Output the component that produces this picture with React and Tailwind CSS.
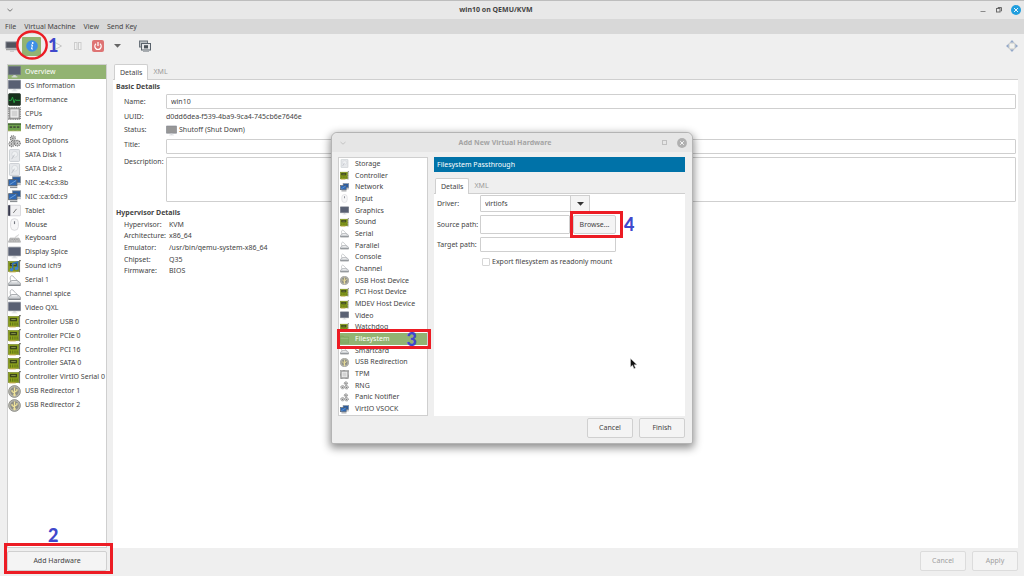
import React from "react";

/* ---------- hardware icons, all on a 16 x 16 grid ---------- */

const MonitorArt = ({ fill = "#596073" }) => (
  <>
    <rect x="0.4" y="1.4" width="15.200" height="10.600" rx="0.600" fill={fill} stroke="#7d828e" strokeWidth="0.800" />
    <path d="M6.500 12.400h3v2h-3z" fill="#d2d4d8" />
    <path d="M4.500 14h7v1.200h-7z" fill="#dfe1e4" />
  </>
);

const CardArt = () => (
  <>
    <path d="M13 3.500h1.500M13 8h1.500M13 12h1.500" stroke="#8b8b86" strokeWidth="1.600" />
    <path d="M15.800 0.800h-1.600v14.400" fill="none" stroke="#74766f" strokeWidth="1.300" />
    <rect x="0.400" y="2" width="12.800" height="12" fill="#8da41b" stroke="#6d7d1c" strokeWidth="0.800" />
    <rect x="2.200" y="3.600" width="9" height="4.200" fill="#3b451a" />
    <path d="M4 5.600h5.500" stroke="#8f9c52" strokeWidth="1.100" />
    <path d="M3 9.200v3.600M5.800 9.200v3.600M8.600 9.200v3.600M11.200 9.200v3.600" stroke="#63731a" strokeWidth="1.300" />
    <path d="M1.500 14.600h8" stroke="#c3a93c" strokeWidth="1.200" />
  </>
);

const SerialArt = () => (
  <>
    <path d="M3.500 9C1.500 4 3.500 0.800 6 2.600S8.500 6 11.500 8" fill="none" stroke="#b2b5b8" strokeWidth="1.200" />
    <path d="M0.800 11L4.500 8h7l3.700 3v3H0.800z" fill="#cfd2d5" stroke="#95999d" strokeWidth="0.900" />
    <path d="M4.500 9.600h6.500" stroke="#f8f8f8" strokeWidth="1.300" />
    <path d="M0.600 13.800h14.800" stroke="#777b7f" strokeWidth="1.300" />
  </>
);

const Gear = ({ cx, cy, r }) => (
  <>
    <circle cx={cx} cy={cy} r={r} fill="#e9e9e9" stroke="#6f6f6f" strokeWidth="1.5" strokeDasharray="1.4 0.9" />
    <circle cx={cx} cy={cy} r={r - 1} fill="#dedede" stroke="#8a8a8a" strokeWidth="0.6" />
    <circle cx={cx} cy={cy} r="0.9" fill="#5a5a5a" />
  </>
);

const art = {
  monitor: <MonitorArt />,
  monitorGrey: <MonitorArt fill="#979797" />,
  performance: (
    <>
      <rect x="0.5" y="0.5" width="15" height="15" rx="2" fill="#17301c" stroke="#3b463d" />
      <path d="M1 9h3l1.500-4 2 7 1.500-4 1 1h5" fill="none" stroke="#28a544" strokeWidth="1.2" />
    </>
  ),
  cpu: (
    <>
      <rect x="1" y="1" width="14" height="14" fill="#a9a9a9" stroke="#777" strokeDasharray="1.300 0.900" strokeWidth="1.6" />
      <rect x="2.500" y="2.500" width="11" height="11" rx="1" fill="#f0f0f0" stroke="#8e8e8e" strokeWidth="0.800" />
      <rect x="4.500" y="4.500" width="7" height="7" fill="#d3d3d3" />
    </>
  ),
  memory: (
    <>
      <rect x="0" y="3" width="16" height="9.500" fill="#6ea04c" />
      <path d="M0 3.800h16" stroke="#3f5e33" strokeWidth="1.600" />
      <path d="M2 7.500h3M6.500 7.500h3M11 7.500h3" stroke="#45533c" strokeWidth="2" />
      <path d="M0 12h16" stroke="#c8b56a" strokeDasharray="1 0.6" />
    </>
  ),
  gears: (
    <>
      <Gear cx={6} cy={4} r={3} />
      <Gear cx={4.500} cy={11} r={3.200} />
      <Gear cx={11.500} cy={10} r={3.500} />
    </>
  ),
  gearsLight: (
    <>
      <Gear cx={10.500} cy={4.200} r={2.900} />
      <Gear cx={4.500} cy={11} r={3.100} />
      <Gear cx={11.500} cy={11} r={3.300} />
    </>
  ),
  disk: (
    <>
      <rect x="1.800" y="0.700" width="12.400" height="14.600" rx="1" fill="#e6e8eb" stroke="#c3c7cc" />
      <circle cx="8.300" cy="6.500" r="3.600" fill="#eff1f3" stroke="#cdd1d6" strokeWidth="0.8" />
      <path d="M8 7l-3.500 5.500" stroke="#b9bdc3" strokeWidth="1.100" />
    </>
  ),
  nic: (
    <>
      <rect x="5.500" y="1" width="10" height="7.500" fill="#2b5c9e" stroke="#8b9097" />
      <path d="M11 10.300h4.800" stroke="#b3b6b9" strokeWidth="2" />
      <rect x="0.800" y="4.500" width="10.200" height="7.500" fill="#2f69b5" stroke="#5a5f66" />
      <path d="M2 10.500L10 5.500" stroke="#6f9fd9" strokeWidth="1.200" />
      <path d="M2.500 14h9" stroke="#8b8f93" strokeWidth="1.800" />
    </>
  ),
  tablet: (
    <>
      <rect x="0.500" y="1.500" width="15" height="13" rx="1" fill="#f1f1f3" stroke="#cfcfd4" />
      <path d="M1.500 1.500v13" stroke="#36384c" strokeWidth="2.600" />
      <path d="M6.500 11l4-5" stroke="#777" strokeWidth="1.200" />
    </>
  ),
  mouse: (
    <>
      <rect x="3.200" y="0.800" width="9.600" height="14.400" rx="4.800" fill="#f6f6f7" stroke="#d4d4d8" />
      <path d="M8 4v3.500" stroke="#777a82" strokeWidth="1.400" />
    </>
  ),
  keyboard: (
    <>
      <path d="M9 7c0-3 4-1 4-4" fill="none" stroke="#c4c4c4" />
      <path d="M2.500 7.500h11l2 5h-15z" fill="#cfcfcf" stroke="#a0a0a0" strokeWidth="0.800" />
      <path d="M3 9h10M2 11h12" stroke="#7f7f7f" strokeWidth="0.900" strokeDasharray="1.500 0.600" />
    </>
  ),
  sound: (
    <>
      <CardArt />
      <path d="M5.800 12V4.500l6-2v8" fill="none" stroke="#2f6fb8" strokeWidth="2" />
      <circle cx="4.400" cy="12" r="2.200" fill="#3f83cf" />
      <circle cx="10.400" cy="10.500" r="2.200" fill="#3f83cf" />
    </>
  ),
  serial: <SerialArt />,
  card: <CardArt />,
  usb: (
    <>
      <circle cx="8" cy="8" r="7.300" fill="#b4b4ae" stroke="#87877f" />
      <circle cx="8" cy="8" r="5.200" fill="#8f8f84" />
      <path d="M8 13V3M8 10L5 8V6M8 9l3-2V5" fill="none" stroke="#efe39a" strokeWidth="1.500" />
      <circle cx="8" cy="12.300" r="1.500" fill="#efe39a" />
    </>
  ),
  folder: (
    <>
      <path d="M0.800 2h5l1.500 1.600h8v11H0.800z" fill="#86ad66" stroke="#78a058" />
      <path d="M1 5.800h14" stroke="#b3cc9b" />
    </>
  ),
};

const Icon = ({ name, className }) => (
  <svg viewBox="0 0 16 16" className={`shrink-0 ${className}`} aria-hidden="true">
    {art[name]}
  </svg>
);

/* ---------- data ---------- */

const devices = [
  ["Overview", "monitor"],
  ["OS information", "monitor"],
  ["Performance", "performance"],
  ["CPUs", "cpu"],
  ["Memory", "memory"],
  ["Boot Options", "gears"],
  ["SATA Disk 1", "disk"],
  ["SATA Disk 2", "disk"],
  ["NIC :e4:c3:8b", "nic"],
  ["NIC :ca:6d:c9", "nic"],
  ["Tablet", "tablet"],
  ["Mouse", "mouse"],
  ["Keyboard", "keyboard"],
  ["Display Spice", "monitor"],
  ["Sound ich9", "sound"],
  ["Serial 1", "serial"],
  ["Channel spice", "serial"],
  ["Video QXL", "monitor"],
  ["Controller USB 0", "card"],
  ["Controller PCIe 0", "card"],
  ["Controller PCI 16", "card"],
  ["Controller SATA 0", "card"],
  ["Controller VirtIO Serial 0", "card"],
  ["USB Redirector 1", "usb"],
  ["USB Redirector 2", "usb"],
];

const hardwareTypes = [
  ["Storage", "disk"],
  ["Controller", "card"],
  ["Network", "nic"],
  ["Input", "mouse"],
  ["Graphics", "monitor"],
  ["Sound", "card"],
  ["Serial", "serial"],
  ["Parallel", "serial"],
  ["Console", "serial"],
  ["Channel", "serial"],
  ["USB Host Device", "usb"],
  ["PCI Host Device", "card"],
  ["MDEV Host Device", "card"],
  ["Video", "monitor"],
  ["Watchdog", "card"],
  ["Filesystem", "folder"],
  ["Smartcard", "serial"],
  ["USB Redirection", "usb"],
  ["TPM", "cpu"],
  ["RNG", "gearsLight"],
  ["Panic Notifier", "gearsLight"],
  ["VirtIO VSOCK", "nic"],
];

const hypervisor = [
  ["Hypervisor:", "KVM"],
  ["Architecture:", "x86_64"],
  ["Emulator:", "/usr/bin/qemu-system-x86_64"],
  ["Chipset:", "Q35"],
  ["Firmware:", "BIOS"],
];

/* ---------- shared pieces ---------- */

const Mark = ({ children, className }) => (
  <span
    className={`pointer-events-none absolute z-10 font-['Lato',sans-serif] text-[18px] leading-none font-black text-[#3f48cc] ${className}`}
  >
    {children}
  </span>
);

const Frame = ({ className }) => (
  <span className={`pointer-events-none absolute z-10 border-3 border-[#ec1c24] ${className}`} />
);

const Button = ({ children, className = "", ...rest }) => (
  <button
    type="button"
    className={`rounded-xs border border-[#d0d0d0] bg-[#f4f4f4] text-center disabled:border-[#dcdcdc] disabled:text-[#a0a0a0] ${className}`}
    {...rest}
  >
    {children}
  </button>
);

const Tabs = () => (
  <div role="tablist" className="flex h-[15px] shrink-0 items-stretch pl-px">
    <button
      type="button"
      role="tab"
      aria-selected="true"
      className="z-[1] -mb-px rounded-t-xs border border-b-0 border-[#cfcfcf] bg-white px-[5px]"
    >
      Details
    </button>
    <button type="button" role="tab" aria-selected="false" className="px-[5px] text-[#9a9a9a]">
      XML
    </button>
  </div>
);

const field = "rounded-[1px] border border-[#cfcfcf] bg-white px-1 outline-none";

/* ---------- window parts ---------- */

function TitleBar() {
  return (
    <header className="flex h-[19px] items-center border-t border-[#bdbdbd] bg-[#e8e8e8]">
      <button type="button" aria-label="Window menu" className="flex w-5 justify-center">
        <svg viewBox="0 0 6 6" className="size-[6px]" fill="none" stroke="#777">
          <path d="M0.500 2l2.500 2.200L5.500 2" />
        </svg>
      </button>
      <h1 className="flex-1 text-center font-bold">win10 on QEMU/KVM</h1>
      <div className="flex w-[52px] items-center justify-end gap-2 pr-[3px]">
        <button type="button" aria-label="Minimize">
          <svg viewBox="0 0 8 8" className="size-2" stroke="#8a8a8a">
            <path d="M1.500 5.500h5" />
          </svg>
        </button>
        <button type="button" aria-label="Restore">
          <svg viewBox="0 0 8 8" className="size-2" fill="none" stroke="#6a6a6a">
            <path d="M3 2.500V1.500h3.500v3.500h-1" />
            <rect x="1.500" y="2.500" width="3.500" height="3.500" />
          </svg>
        </button>
        <button type="button" aria-label="Close">
          <svg viewBox="0 0 10 10" className="size-[10px]">
            <circle cx="5" cy="5" r="5" fill="#1f9ede" />
            <path d="M3 3l4 4M7 3l-4 4" stroke="#fff" strokeWidth="0.900" />
          </svg>
        </button>
      </div>
    </header>
  );
}

function MenuBar() {
  return (
    <nav className="flex h-[15px] items-center gap-2 bg-[#d8d8d8] px-[5px]">
      {["File", "Virtual Machine", "View", "Send Key"].map((m) => (
        <button key={m} type="button">
          {m}
        </button>
      ))}
    </nav>
  );
}

function ToolBar() {
  return (
    <div className="flex h-6 items-center pr-[6px] pl-[5px]">
      <button type="button" aria-label="Show console" className="mr-1">
        <svg viewBox="0 0 13 12" className="h-3 w-[13px]">
          <rect x="1" y="2" width="11" height="6" fill="#50545e" stroke="#7b7f88" />
          <path d="M1 9.500h11" stroke="#a2a2a2" strokeWidth="1.500" />
          <path d="M5 11.200h4" stroke="#c2c2c2" />
        </svg>
      </button>
      <div className="relative flex">
        <button
          type="button"
          aria-label="Show details"
          className="flex h-[19px] w-[19px] items-center justify-center rounded-[1px] bg-[#92b372]"
        >
          <svg viewBox="0 0 12 12" className="size-3">
            <circle cx="6" cy="6" r="5.800" fill="#3f8fe6" />
            <circle cx="6.700" cy="3" r="0.900" fill="#fff" />
            <path d="M5 5h1.500L5.500 9H7" fill="none" stroke="#fff" />
          </svg>
        </button>
        <svg viewBox="0 0 32 30" className="pointer-events-none absolute -top-[7px] -left-[6px] h-[30px] w-8 max-w-none">
          <ellipse cx="16" cy="15" rx="14.700" ry="13.500" fill="none" stroke="#ec1c24" strokeWidth="2.400" />
        </svg>
        <Mark className="-top-[1px] left-[26px]">1</Mark>
      </div>
      <button type="button" aria-label="Run" className="ml-3" disabled>
        <svg viewBox="0 0 10 10" className="size-[10px]" fill="#f5f5f5" stroke="#c6c6c6">
          <path d="M2 1.500l6.500 3.500L2 8.500z" />
        </svg>
      </button>
      <button type="button" aria-label="Pause" className="ml-[10px]" disabled>
        <svg viewBox="0 0 10 10" className="size-[10px]" fill="#f2f2f2" stroke="#cdcdcd">
          <rect x="1.500" y="1.500" width="2.500" height="7" />
          <rect x="5.500" y="1.500" width="2.500" height="7" />
        </svg>
      </button>
      <button type="button" aria-label="Shut down" className="ml-[9px]">
        <svg viewBox="0 0 12 12" className="size-3" fill="none">
          <rect width="12" height="12" rx="2" fill="#de7474" />
          <path d="M4 3.800a3.200 3.200 0 1 0 4 0M6 2v4" stroke="#fff" strokeWidth="1.200" />
        </svg>
      </button>
      <button type="button" aria-label="Shut down options" className="ml-[10px]">
        <svg viewBox="0 0 7 4" className="h-1 w-[7px]" fill="#666">
          <path d="M0 0h7L3.500 3.800z" />
        </svg>
      </button>
      <button type="button" aria-label="Snapshots" className="ml-[18px]">
        <svg viewBox="0 0 12 12" className="size-3">
          <rect x="0.500" y="1" width="8" height="6" fill="#b9bec2" stroke="#6c747c" />
          <rect x="2.500" y="3.500" width="9" height="6.500" fill="#e4e6e8" stroke="#59626b" />
          <rect x="5" y="5.200" width="4" height="3.200" fill="#4a5259" />
          <path d="M4 11.500h6" stroke="#a8acb0" />
        </svg>
      </button>
      <button type="button" aria-label="Fullscreen" className="ml-auto">
        <svg viewBox="0 0 12 12" className="size-3">
          <rect x="3" y="3" width="6" height="6" rx="1" fill="#f3f3ef" stroke="#c6c7c4" />
          <path d="M3.800 2.600L6 0l2.200 2.600zM3.800 9.400L6 12l2.200-2.600zM2.600 3.800L0 6l2.600 2.200zM9.400 3.800L12 6 9.400 8.200z" fill="#93a8c8" />
        </svg>
      </button>
    </div>
  );
}

function Sidebar() {
  return (
    <aside className="flex w-[100px] shrink-0 flex-col gap-[3px]">
      <div className="relative flex-1 border border-[#cfcfcf] bg-white">
        <ul className="grid h-[347px] auto-rows-fr">
          {devices.map(([label, icon], i) => (
            <li key={label} className="flex min-h-0">
              <button
                type="button"
                className={`flex w-full items-center gap-1 text-left whitespace-nowrap ${
                  i === 0 ? "bg-[#92b372] text-white" : ""
                }`}
              >
                <Icon name={icon} className="size-[13px]" />
                {label}
              </button>
            </li>
          ))}
        </ul>
        <Mark className="bottom-[3px] left-10">2</Mark>
      </div>
      <div className="relative flex">
        <Button className="h-5 flex-1">Add Hardware</Button>
        <Frame className="-top-[8px] -right-[6px] -bottom-[3px] -left-[3px]" />
      </div>
    </aside>
  );
}

function Details() {
  return (
    <section className="flex min-w-0 flex-1 flex-col">
      <Tabs />
      <div className="flex-1 border-t border-[#cfcfcf] bg-white pr-[2px] pl-[3px]">
        <h2 className="h-[14px] leading-[13px] font-bold">Basic Details</h2>
        <div className="grid grid-cols-[42px_1fr] items-center pl-2">
          <label htmlFor="name">Name:</label>
          <input id="name" defaultValue="win10" className={`h-[15px] ${field}`} />
          <span className="leading-[15px]">UUID:</span>
          <span>d0dd6dea-f539-4ba9-9ca4-745cb6e7646e</span>
          <span className="leading-[12px]">Status:</span>
          <span className="flex items-center gap-[2px]">
            <Icon name="monitorGrey" className="size-[11px]" />
            Shutoff (Shut Down)
          </span>
          <label htmlFor="title">Title:</label>
          <input id="title" className={`mt-[3px] h-[15px] ${field}`} />
          <label htmlFor="description" className="mt-[3px] self-start leading-[10px]">
            Description:
          </label>
          <textarea id="description" className={`mt-[3px] block h-[45px] resize-none ${field}`} />
        </div>
        <h2 className="mt-[5px] h-3 leading-3 font-bold">Hypervisor Details</h2>
        <dl className="grid h-[58px] auto-rows-fr grid-cols-[45px_1fr] items-center pl-2">
          {hypervisor.map(([k, v]) => (
            <React.Fragment key={k}>
              <dt>{k}</dt>
              <dd>{v}</dd>
            </React.Fragment>
          ))}
        </dl>
      </div>
      <div className="flex justify-end gap-[6px] pt-[3px]">
        <Button disabled className="h-5 w-[46px]">
          Cancel
        </Button>
        <Button disabled className="h-5 w-[46px]">
          Apply
        </Button>
      </div>
    </section>
  );
}

function AddHardwareDialog() {
  return (
    <div
      role="dialog"
      aria-label="Add New Virtual Hardware"
      className="flex w-[362px] flex-col rounded-t-md rounded-b-xs border border-[#b4b4b4] bg-[#efefef] shadow-[0_3px_9px_1px_rgba(0,0,0,0.45)]"
    >
      <div className="flex h-[19px] items-center rounded-t-md bg-[#e6e6e6] text-[#a4a4a4]">
        <span className="flex w-[22px] justify-center">
          <svg viewBox="0 0 6 6" className="size-[6px]" fill="none" stroke="#c4c4c4">
            <path d="M0.500 2l2.500 2.200L5.500 2" />
          </svg>
        </span>
        <h2 className="flex-1 text-center font-bold">Add New Virtual Hardware</h2>
        <div className="flex w-9 items-center justify-end gap-[9px] pr-[5px]">
          <button type="button" aria-label="Maximize">
            <svg viewBox="0 0 6 6" className="size-[6px]" fill="none" stroke="#c0c0c0">
              <rect x="0.500" y="0.500" width="4" height="4" />
            </svg>
          </button>
          <button type="button" aria-label="Close dialog">
            <svg viewBox="0 0 10 10" className="size-[10px]">
              <circle cx="5" cy="5" r="4.900" fill="#b0b0b0" />
              <path d="M3.200 3.200l3.600 3.600M6.800 3.200L3.200 6.800" stroke="#f4f4f4" />
            </svg>
          </button>
        </div>
      </div>

      <div className="flex gap-[6px] pt-[5px] pr-[7px] pl-[6px]">
        <ul className="grid h-[259px] w-[90px] auto-rows-fr border border-[#cfcfcf] bg-white">
          {hardwareTypes.map(([label, icon]) => {
            const selected = label === "Filesystem";
            return (
              <li key={label} className="relative flex min-h-0">
                <button
                  type="button"
                  className={`flex w-full items-center gap-[6px] pl-px text-left whitespace-nowrap ${
                    selected ? "bg-[#92b372] text-white" : ""
                  }`}
                >
                  <Icon name={icon} className="size-[9px]" />
                  {label}
                </button>
                {selected && (
                  <>
                    <Frame className="-top-[4px] -right-[4px] -bottom-[4px] -left-[2px]" />
                    <Mark className="-top-[3px] right-[10px]">3</Mark>
                  </>
                )}
              </li>
            );
          })}
        </ul>

        <div className="flex min-w-0 flex-1 flex-col">
          <h3 className="mb-[6px] h-[15px] bg-[#0072a8] px-[3px] leading-[15px] text-white">Filesystem Passthrough</h3>
          <Tabs />
          <div className="relative flex flex-1 flex-col gap-[3px] border-t border-[#cfcfcf] bg-white px-[3px] pt-px">
            <div className="flex items-center">
              <label htmlFor="driver" className="w-[43px]">
                Driver:
              </label>
              <div className="relative flex h-[17px] w-[110px]">
                <select id="driver" className={`w-full appearance-none ${field}`}>
                  <option>virtiofs</option>
                </select>
                <span className="pointer-events-none absolute inset-y-0 right-0 flex w-5 items-center justify-center border border-[#cfcfcf] bg-[#f4f4f4]">
                  <svg viewBox="0 0 7 4" className="h-1 w-[7px]" fill="#333">
                    <path d="M0 0h7L3.500 3.800z" />
                  </svg>
                </span>
              </div>
            </div>
            <div className="flex items-center">
              <label htmlFor="source" className="w-[43px] whitespace-nowrap">
                Source path:
              </label>
              <div className="flex gap-[3px]">
                <input id="source" className={`h-[19px] w-[90px] ${field}`} />
                <div className="relative flex">
                  <Button className="w-[43px]">Browse...</Button>
                  <Frame className="-top-[4px] -right-[7px] -bottom-[4px] -left-[3px]" />
                  <Mark className="left-[51px]">4</Mark>
                </div>
              </div>
            </div>
            <div className="flex items-center">
              <label htmlFor="target" className="w-[43px] whitespace-nowrap">
                Target path:
              </label>
              <input id="target" className={`h-[15px] w-[136px] ${field}`} />
            </div>
            <label className="ml-[45px] flex h-[13px] items-center gap-[2px]">
              <input
                type="checkbox"
                className="size-2 appearance-none rounded-[1px] border border-[#d6d6d6] bg-white"
              />
              Export filesystem as readonly mount
            </label>
            <svg viewBox="0 0 8 12" className="absolute top-[164px] left-[196px] h-3 w-2">
              <path d="M0.500 0.500v8.500l2-1.800 1.500 3.500 1.500-.7L4 6.800h3z" fill="#111" stroke="#ddd" strokeWidth="0.500" />
            </svg>
          </div>
        </div>
      </div>

      <div className="flex justify-end gap-[6px] pt-[2px] pr-[7px] pb-[5px]">
        <Button className="h-5 w-[46px]">Cancel</Button>
        <Button className="h-5 w-[46px]">Finish</Button>
      </div>
    </div>
  );
}

export default function App() {
  return (
    <div className="relative flex min-h-screen flex-col bg-[#efefef] font-['Noto_Sans',sans-serif] text-[7px] leading-[10px] text-[#444]">
      <TitleBar />
      <MenuBar />
      <ToolBar />
      <main className="flex flex-1 gap-[6px] pt-[6px] pr-[6px] pb-[5px] pl-[7px]">
        <Sidebar />
        <Details />
      </main>
      <div className="absolute inset-0 flex items-center justify-center">
        <AddHardwareDialog />
      </div>
    </div>
  );
}
